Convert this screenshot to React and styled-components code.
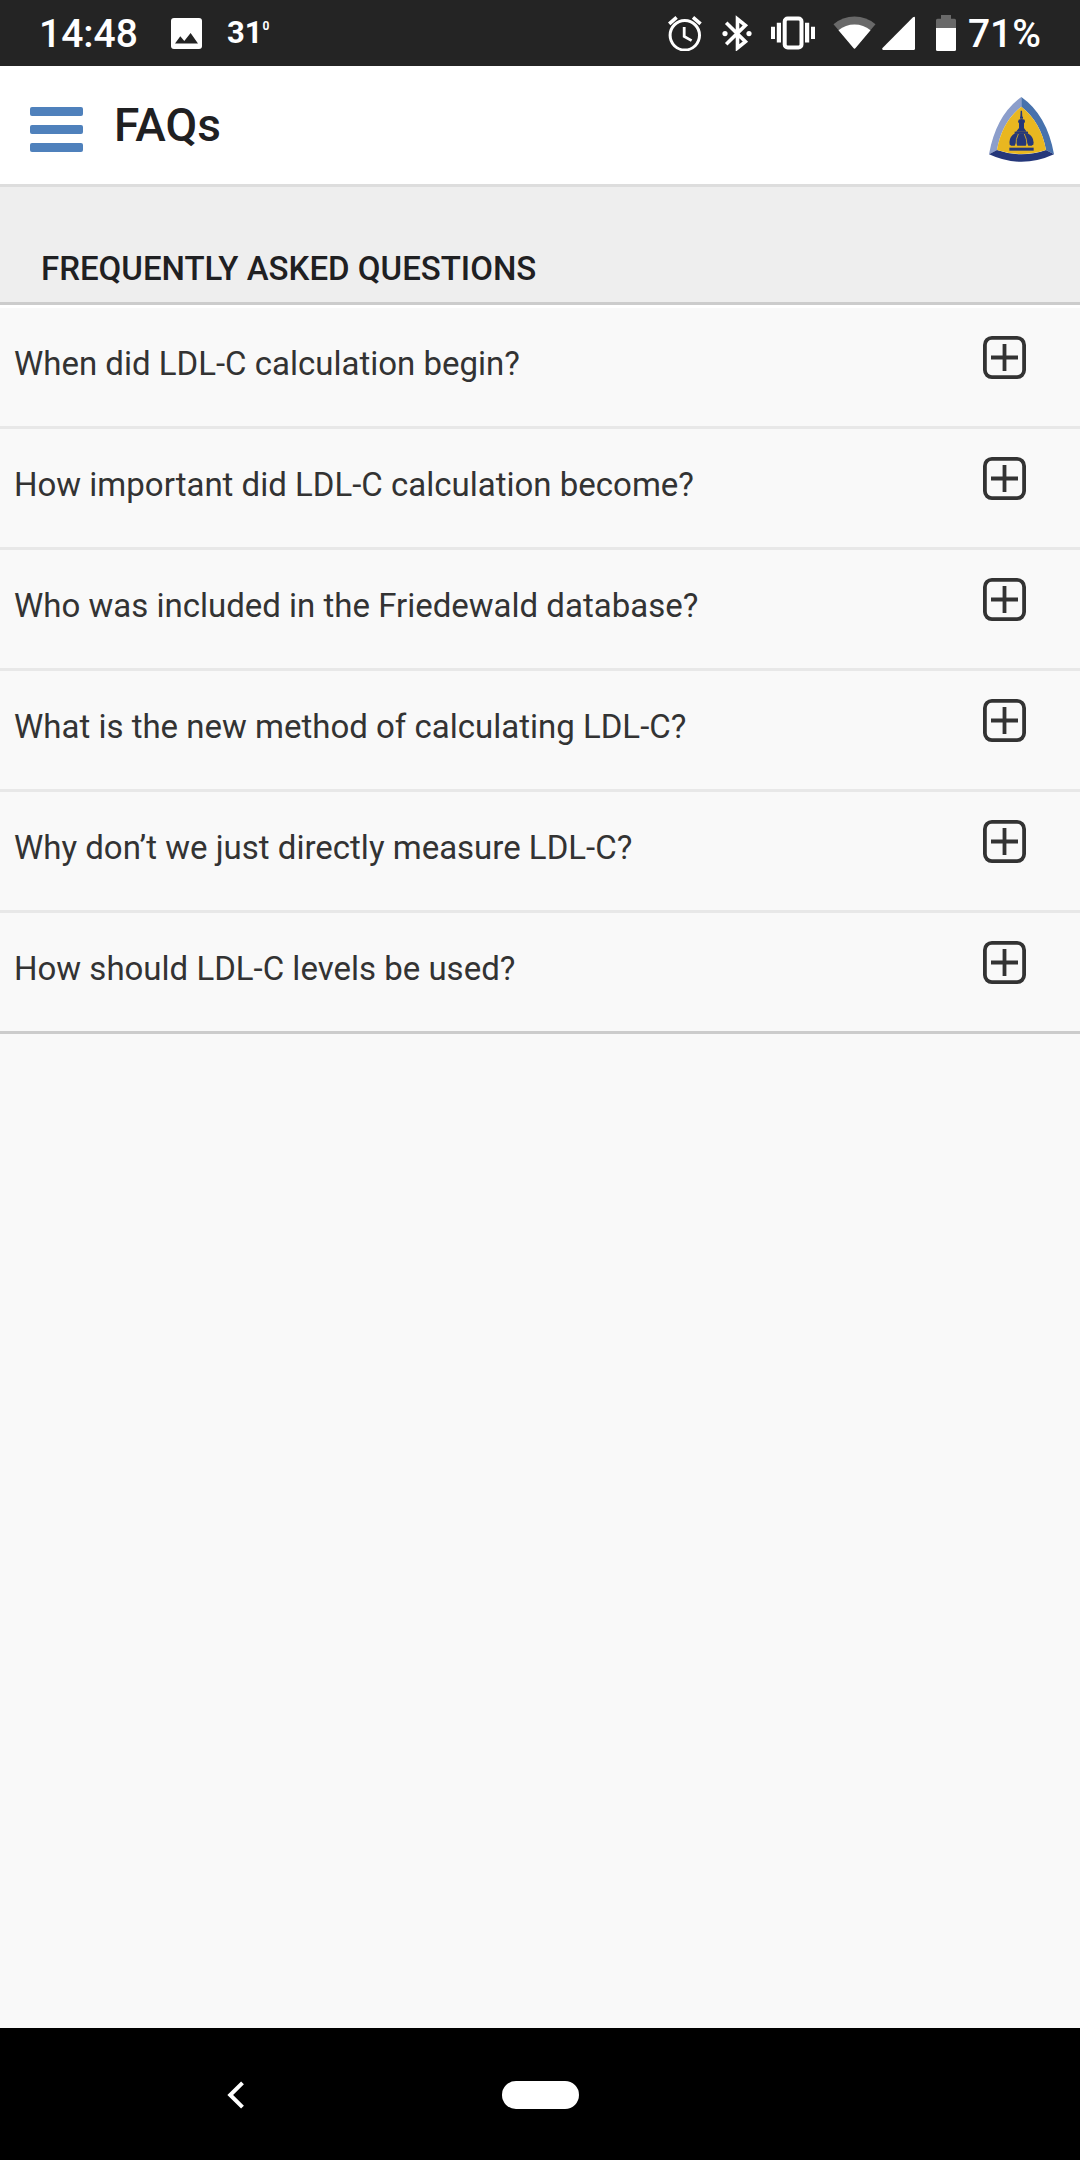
import React from "react";
import styled, { createGlobalStyle } from "styled-components";

const GlobalStyle = createGlobalStyle`
  * { box-sizing: border-box; }
  body {
    margin: 0;
    background: #f9f9f9;
    font-family: Roboto, "Noto Sans", sans-serif;
  }
`;

const Screen = styled.div`
  display: flex;
  flex-direction: column;
  min-height: 100vh;
`;

const StatusBar = styled.div`
  display: flex;
  align-items: center;
  justify-content: space-between;
  height: 66px;
  padding: 0 39px;
  background: #242424;
  color: #fff;
`;

const StatusGroup = styled.div`
  display: flex;
  align-items: center;
`;

const StatusText = styled.span`
  padding-top: 2px;
  font-size: 39px;
  font-weight: 500;
  line-height: 64px;
`;

const Temperature = styled.span`
  display: flex;
  align-items: flex-start;
  margin-left: 25px;
  font-size: 31px;
  font-weight: 700;
  line-height: 34px;
`;

const Degree = styled.span`
  font-size: 12px;
  line-height: 20px;
`;

const Glyph = styled.svg`
  display: block;
  flex: none;
  margin-left: ${(p) => p.$gap || 0}px;
  margin-right: ${(p) => p.$gapAfter || 0}px;
`;

const Header = styled.header`
  display: flex;
  align-items: center;
  height: 121px;
  padding: 8px 26px 0 30px;
  background: #fff;
  border-bottom: 3px solid #ddd;
`;

const MenuButton = styled.button`
  display: flex;
  flex-direction: column;
  gap: 9px;
  width: 53px;
  padding: 0;
  border: 0;
  background: none;
`;

const MenuBar = styled.span`
  height: 9px;
  border-radius: 2px;
  background: #4f81bc;
`;

const Title = styled.h1`
  flex: 1;
  margin: 0 0 0 31px;
  padding-bottom: 8px;
  color: #1f2022;
  font-size: 46px;
  font-weight: 500;
  line-height: 56px;
`;

const SectionHeading = styled.h2`
  margin: 0;
  padding: 61px 41px 12px;
  background: #eee;
  border-bottom: 3px solid #ccc;
  color: #1f2022;
  font-size: 33px;
  font-weight: 500;
  line-height: 42px;
`;

const Main = styled.main`
  flex: 1;
`;

const QuestionList = styled.ul`
  margin: 0;
  padding: 0;
  list-style: none;
  border-top: 3px solid #fff;
  border-bottom: 3px solid #ccc;
`;

const QuestionItem = styled.li`
  & + & {
    border-top: 3px solid #e8e8e8;
  }
`;

const Question = styled.button`
  display: flex;
  align-items: flex-start;
  justify-content: space-between;
  width: 100%;
  padding: 28px 54px 34px 14px;
  border: 0;
  background: none;
  color: #333;
  font-family: inherit;
  font-size: 33px;
  line-height: 56px;
  text-align: left;
`;

const NavBar = styled.nav`
  display: grid;
  grid-template-columns: repeat(3, 1fr);
  align-items: center;
  justify-items: center;
  height: 132px;
  padding: 1px 81px 0 83px;
  background: #000;
`;

const BackButton = styled.button`
  padding: 0;
  border: 0;
  background: none;
`;

const HomeButton = styled.button`
  width: 77px;
  height: 28px;
  padding: 0;
  border: 0;
  border-radius: 14px;
  background: #fff;
`;

const questions = [
  "When did LDL-C calculation begin?",
  "How important did LDL-C calculation become?",
  "Who was included in the Friedewald database?",
  "What is the new method of calculating LDL-C?",
  "Why don’t we just directly measure LDL-C?",
  "How should LDL-C levels be used?",
];

const PictureIcon = () => (
  <Glyph $gap={33} width="31" height="31" viewBox="0 0 31 31" aria-hidden="true">
    <rect width="31" height="31" rx="3" fill="#fff" />
    <path d="M4 25.5 9.3 18.2 13.3 23 19.6 15 27 25.5Z" fill="#242424" />
  </Glyph>
);

const AlarmIcon = () => (
  <Glyph width="34" height="36" viewBox="0 0 34 36" fill="none" stroke="#fff" aria-hidden="true">
    <circle cx="16.8" cy="20.3" r="14.7" strokeWidth="3" />
    <path d="M1.2 8.8 8.6 2.4M25 2.4 32.6 8.8" strokeWidth="3.6" />
    <path d="M16.2 12V21.4L23.6 25.6" strokeWidth="2.8" />
  </Glyph>
);

const BluetoothIcon = () => (
  <Glyph $gap={20} width="30" height="36" viewBox="0 0 30 36" fill="none" stroke="#fff" aria-hidden="true">
    <path d="M4.2 7.8 23.4 26.6 15.5 33V4L23.4 10.4 4.2 29.2" strokeWidth="3.6" />
    <circle cx="3" cy="18.6" r="2.6" fill="#fff" stroke="none" />
    <circle cx="27" cy="18.6" r="2.6" fill="#fff" stroke="none" />
  </Glyph>
);

const VibrateIcon = () => (
  <Glyph $gap={19} width="44" height="34" viewBox="0 0 44 34" fill="#fff" aria-hidden="true">
    <rect x="13.7" y="2.5" width="16.8" height="29" rx="3" fill="none" stroke="#fff" strokeWidth="4" />
    <path d="M0 10.7H4V23H0ZM5.8 6.7H10V26.5H5.8ZM34 6.7H38.2V26.5H34ZM40 10.7H44V23H40Z" />
  </Glyph>
);

const WifiIcon = () => (
  <Glyph $gap={18} width="43" height="34" viewBox="0 0 43 34" aria-hidden="true">
    <path d="M.5 8.2Q9.7.5 21.5.5T42.5 8.2L21.5 33Z" fill="#696969" />
    <path d="M5.5 14.3Q12.5 8.5 21.5 8.5T37.5 14.3L22.3 32.3Q21.5 33.2 20.7 32.3Z" fill="#fff" />
  </Glyph>
);

const SignalIcon = () => (
  <Glyph $gap={6} width="33" height="34" viewBox="0 0 33 34" aria-hidden="true">
    <path d="M31 1.2Q33 0 33 2V32.5Q33 34 31.5 34H1.2Q-.5 33.5.5 32Z" fill="#fff" />
  </Glyph>
);

const BatteryIcon = () => (
  <Glyph $gap={21} $gapAfter={12} width="20" height="36" viewBox="0 0 20 36" aria-hidden="true">
    <path d="M5 0H15V3.7H18.5Q20 3.7 20 5.2V13H0V5.2Q0 3.7 1.5 3.7H5Z" fill="#696969" />
    <path d="M0 13H20V34.5Q20 36 18.5 36H1.5Q0 36 0 34.5Z" fill="#fff" />
  </Glyph>
);

const Logo = () => (
  <Glyph width="65" height="65" viewBox="56 49 195 195" role="img" aria-label="Shield with dome">
    <path d="M153 49Q77 103 56 221L80 208Q94 124 153 78Z" fill="#8c9ecb" />
    <path d="M153 49Q230 103 251 221L227 208Q212 124 153 78Z" fill="#4772ad" />
    <path d="M56 221L80 208Q153 234 227 208L251 221Q153 266 56 221Z" fill="#25377a" />
    <path d="M153 78Q94 124 80 208Q153 232 227 208Q212 124 153 78Z" fill="#e9b720" />
    <g fill="#25377a">
      <path d="M151 90H155L156 108H158V114H149V108H150Z" />
      <path d="M145 117Q153 113 163 117L164 124 161 128V142L169 153H137L146 142V128L143 124Z" />
      <path d="M133 153H173V159H133Z" />
      <path d="M134 158H172Q193 170 189 191L184 195H122L118 191Q114 170 134 158Z" />
      <path d="M117 201H190V210H117Z" />
    </g>
    <path d="M144 160Q136 174 137 196M162 160Q170 174 170 196" fill="none" stroke="#e9b720" strokeWidth="2.4" />
    <path d="M133 196 137 187 141 196ZM166 196 170 187 174 196Z" fill="#e9b720" />
  </Glyph>
);

const PlusIcon = () => (
  <Glyph width="43" height="43" viewBox="0 0 43 43" fill="none" stroke="#333" aria-hidden="true">
    <rect x="1.9" y="1.9" width="39.2" height="39.2" rx="7" strokeWidth="3.8" />
    <path d="M21.5 8V35M8 21.5H35" strokeWidth="3.8" />
  </Glyph>
);

export default function App() {
  return (
    <Screen>
      <GlobalStyle />
      <StatusBar>
        <StatusGroup>
          <StatusText>14:48</StatusText>
          <PictureIcon />
          <Temperature>
            31<Degree>0</Degree>
          </Temperature>
        </StatusGroup>
        <StatusGroup>
          <AlarmIcon />
          <BluetoothIcon />
          <VibrateIcon />
          <WifiIcon />
          <SignalIcon />
          <BatteryIcon />
          <StatusText>71%</StatusText>
        </StatusGroup>
      </StatusBar>
      <Header>
        <MenuButton type="button" aria-label="Menu">
          <MenuBar />
          <MenuBar />
          <MenuBar />
        </MenuButton>
        <Title>FAQs</Title>
        <Logo />
      </Header>
      <Main>
        <SectionHeading>FREQUENTLY ASKED QUESTIONS</SectionHeading>
        <QuestionList>
          {questions.map((question) => (
            <QuestionItem key={question}>
              <Question type="button" aria-expanded="false">
                {question}
                <PlusIcon />
              </Question>
            </QuestionItem>
          ))}
        </QuestionList>
      </Main>
      <NavBar>
        <BackButton type="button" aria-label="Back">
          <Glyph width="18" height="28" viewBox="0 0 18 28" fill="none" stroke="#fff" aria-hidden="true">
            <path d="M15.5 1.8 3.2 14 15.5 26.2" strokeWidth="4" />
          </Glyph>
        </BackButton>
        <HomeButton type="button" aria-label="Home" />
      </NavBar>
    </Screen>
  );
}
